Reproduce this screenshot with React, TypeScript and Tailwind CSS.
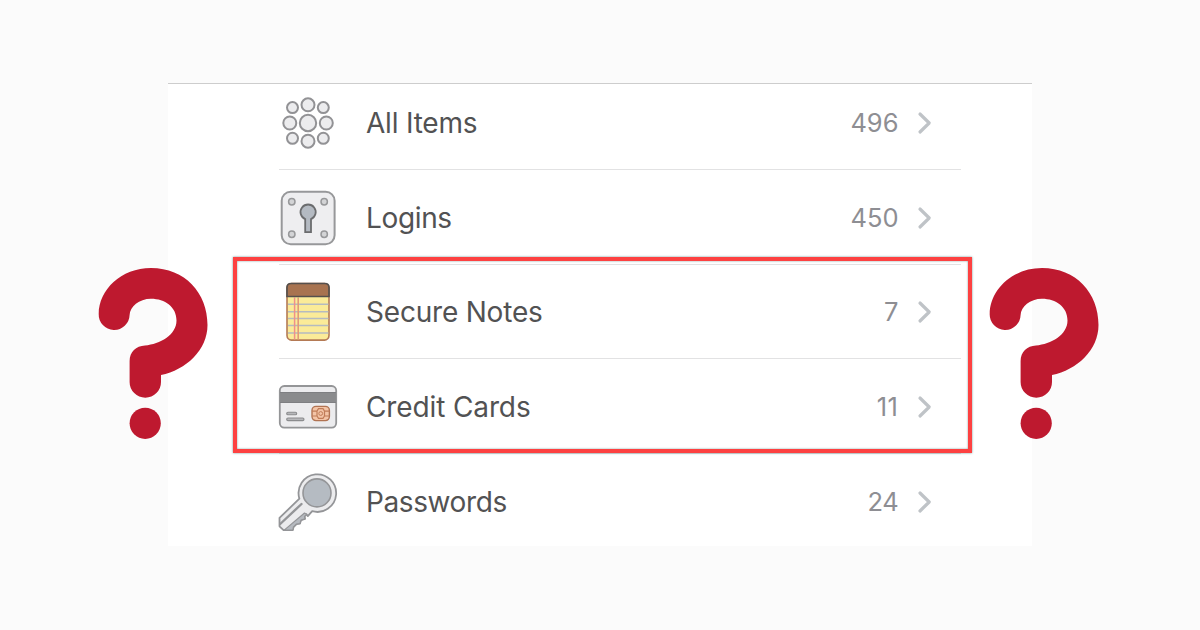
import type { ReactNode } from "react";

const DOTS = [
  [308, 104.8, 6.5],
  [308, 123, 8.2],
  [308, 141.2, 6.5],
  [289.8, 123, 6.5],
  [326.3, 123, 6.5],
  [292.5, 107.6, 5.5],
  [323.3, 107.6, 5.5],
  [292.5, 138.3, 5.5],
  [323.3, 138.3, 5.5],
];

function AllItemsIcon() {
  return (
    <svg width="60" height="60" viewBox="278 93 60 60" fill="#ececee" stroke="#929295" strokeWidth="2">
      {DOTS.map(([x, y, r]) => (
        <circle key={`${x}-${y}`} cx={x} cy={y} r={r} />
      ))}
    </svg>
  );
}

function LoginsIcon() {
  return (
    <svg width="60" height="60" viewBox="278 187.5 60 60">
      <rect x="281.7" y="191.2" width="52.9" height="52.6" rx="9" fill="#eeeef0" stroke="#97989a" strokeWidth="2" />
      <g fill="#d3d4d6" stroke="#97989a" strokeWidth="1.5">
        <circle cx="291.8" cy="201.3" r="3.2" />
        <circle cx="324.2" cy="201.3" r="3.2" />
        <circle cx="291.8" cy="233.7" r="3.2" />
        <circle cx="324.2" cy="233.7" r="3.2" />
      </g>
      <path
        d="M305.2 231.7V218.6A7.6 7.6 0 1 1 311 218.6V231.7Z"
        fill="#b4bac2"
        stroke="#6b6c6e"
        strokeWidth="1.8"
      />
    </svg>
  );
}

function NotesIcon() {
  return (
    <svg width="60" height="60" viewBox="278 282.5 60 60">
      <rect x="287" y="284" width="42" height="56.6" rx="4.5" fill="#fbeb98" stroke="#b47a55" strokeWidth="1.6" />
      <path d="M288 304.8H328.4M288 312.2H328.4M288 319H328.4M288 326H328.4M288 333.6H328.4" stroke="#b5bbc0" strokeWidth="1.5" />
      <path d="M294.6 298V340" stroke="#f0908a" strokeWidth="1.5" />
      <path d="M298.2 298V340" stroke="#e29a78" strokeWidth="1.6" />
      <path d="M287 297V288Q287 284 291 284H325Q329 284 329 288V297Z" fill="#a87350" stroke="#55504d" strokeWidth="1.7" />
    </svg>
  );
}

function CardIcon() {
  return (
    <svg width="60" height="60" viewBox="278 377 60 60">
      <rect x="279.8" y="386" width="56.4" height="41.6" rx="4.5" fill="#ececee" stroke="#949597" strokeWidth="1.8" />
      <path d="M280 392.4H336V402.6H280Z" fill="#8a8b8d" />
      <path d="M280 392.5H336M280 402.5H336" stroke="#7e7f82" strokeWidth="1" />
      <rect x="286.7" y="412.2" width="10" height="2.6" rx="1.3" fill="#b6b7ba" stroke="#8b8c8e" strokeWidth="1.1" />
      <rect x="286.7" y="418" width="17.3" height="2.6" rx="1.3" fill="#b6b7ba" stroke="#8b8c8e" strokeWidth="1.1" />
      <rect x="312" y="406.4" width="17.4" height="14.2" rx="4" fill="#f3c4a6" stroke="#b17352" strokeWidth="1.4" />
      <path
        d="M312 411.1H317L318.5 408.6H323L324.5 411.1H329.4M312 416H317L318.5 418.4H323L324.5 416H329.4M317 411.1V416M324.5 411.1V416"
        fill="none"
        stroke="#c07c58"
        strokeWidth="1.2"
      />
      <circle cx="320.7" cy="413.5" r="1.9" fill="#f3c4a6" stroke="#c07c58" />
    </svg>
  );
}

function KeyIcon() {
  return (
    <svg width="60" height="60" viewBox="278 471.5 60 60">
      <path
        d="M299.4 498.2A18.8 18.8 0 1 1 312.2 510.7L307.8 515.6L306.5 513.8L304.5 515.8L305 518.3L301 519.6L300 523L296.5 523.5L293.5 526.5L292.8 529.6H283.5L279.5 525.8V517.4Z"
        fill="#ececee"
        stroke="#949598"
        strokeWidth="1.8"
        strokeLinejoin="round"
      />
      <path
        d="M284.5 529.4L304.5 512.5L306.5 513.8L304.5 515.8L305 518.3L301 519.6L300 523L296.5 523.5L293.5 526.5L292.8 529.6Z"
        fill="#b6bac0"
        stroke="#949598"
        strokeWidth="1.2"
        strokeLinejoin="round"
      />
      <path d="M280.2 523.5L301.5 503.5" stroke="#949598" strokeWidth="2.4" strokeLinecap="round" />
      <circle cx="317" cy="492.4" r="14" fill="#b5bbc2" stroke="#949598" strokeWidth="1.6" />
    </svg>
  );
}

function Chevron() {
  return (
    <svg width="16" height="24" viewBox="0 0 16 24" fill="none" stroke="#bfc3c7" strokeWidth="3.2" strokeLinecap="round" strokeLinejoin="round">
      <path d="M3 3L12.2 12L3 21" />
    </svg>
  );
}

function QuestionMark() {
  return (
    <svg width="110" height="173" viewBox="98 267 110 173" fill="#be192f">
      <path d="M98.7 314C98.7 290 121 268 151 268C185 268 207.5 293 207.5 325C207.5 350 186 370 161 375V382A15.7 15.7 0 0 1 129.6 382V361C129.6 352 136 346 145 345.5C160 344 176.5 335 176.5 320.5C176.5 307 165 298.8 151 298.8C139 298.8 129.9 307 129.6 315A15.45 15.45 0 0 1 98.7 314Z" />
      <circle cx="145.2" cy="423.3" r="15.6" />
    </svg>
  );
}

type Item = { label: string; count: number; icon: ReactNode; row: string; labelClass: string; countClass: string };

const ITEMS: Item[] = [
  { label: "All Items", count: 496, icon: <AllItemsIcon />, row: "h-[86px] pb-[7px]", labelClass: "tracking-[-0.2px]", countClass: "tracking-normal" },
  { label: "Logins", count: 450, icon: <LoginsIcon />, row: "h-[95px] pt-[2px]", labelClass: "tracking-[-0.35px]", countClass: "tracking-normal" },
  { label: "Secure Notes", count: 7, icon: <NotesIcon />, row: "h-[94px] pt-[1px]", labelClass: "tracking-[-0.2px]", countClass: "tracking-normal" },
  { label: "Credit Cards", count: 11, icon: <CardIcon />, row: "h-[95px] pt-[2px]", labelClass: "tracking-[-0.12px]", countClass: "tracking-[0.5px]" },
  { label: "Passwords", count: 24, icon: <KeyIcon />, row: "h-[94px] pt-[1px]", labelClass: "tracking-[-0.4px]", countClass: "tracking-[-0.3px]" },
];

export default function App() {
  return (
    <div className="relative h-[630px] w-[1200px] overflow-hidden bg-[#fbfbfb] pt-[83px] font-['Inter','Liberation_Sans',sans-serif]">
      <main className="mx-auto h-[463px] w-[864px] overflow-hidden border-t border-[#cdcdcd] bg-white pr-[71px] pl-[111px]">
        <ul>
          {ITEMS.map((item) => (
            <li
              key={item.label}
              className={`flex items-center border-b border-[#e2e2e3] pr-[28px] last:border-b-0 ${item.row}`}
            >
              <span className="-ml-px w-[88px] shrink-0">{item.icon}</span>
              <span className={`flex-1 text-[28px] leading-9 text-[#525253] ${item.labelClass}`}>{item.label}</span>
              <span className={`mr-[18.5px] text-[25.5px] leading-9 text-[#8e8e93] ${item.countClass}`}>{item.count}</span>
              <Chevron />
            </li>
          ))}
        </ul>
      </main>
      <div className="absolute top-[257px] left-[233px] h-[196px] w-[739px] border-4 border-[#fd4141] shadow-[0_0_2px_rgba(80,120,120,0.8),inset_0_0_2px_rgba(80,120,120,0.8)]" />
      <div className="absolute top-[267px] left-[98px]">
        <QuestionMark />
      </div>
      <div className="absolute top-[267px] left-[989px]">
        <QuestionMark />
      </div>
    </div>
  );
}
